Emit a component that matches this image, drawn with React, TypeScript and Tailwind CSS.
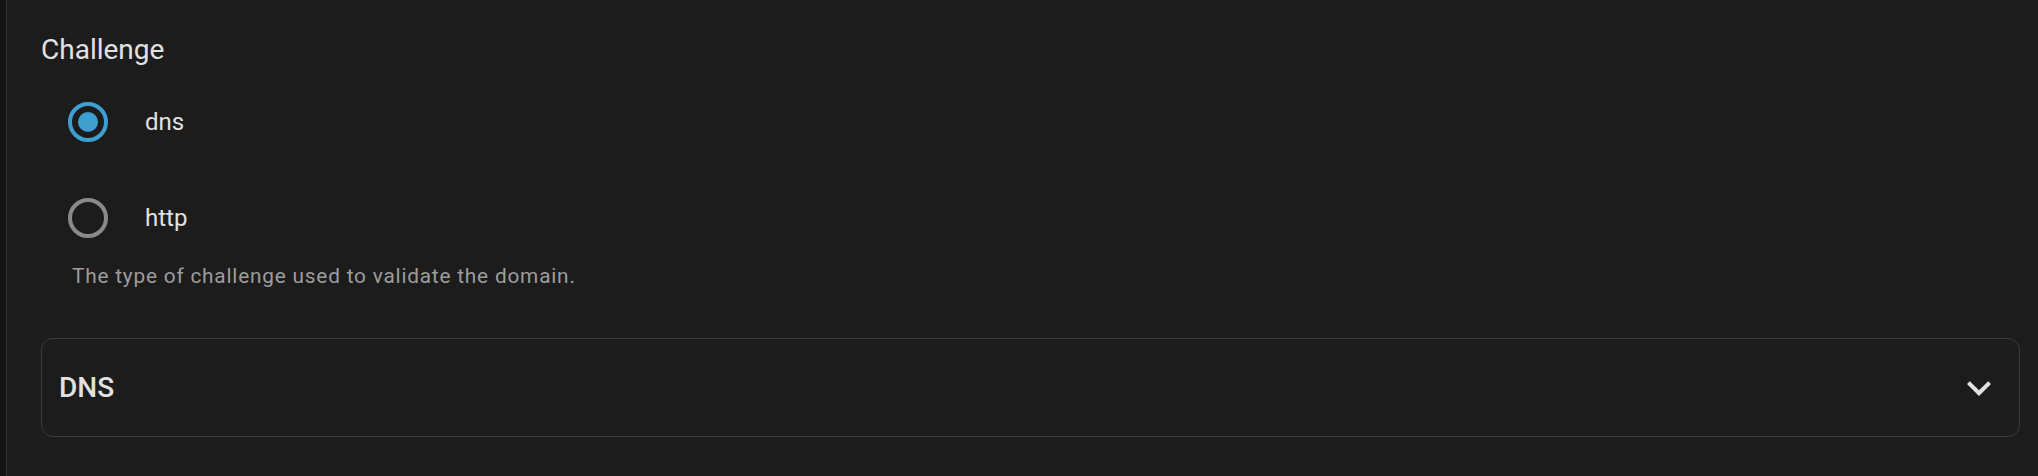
import { useState } from "react";

const options = ["dns", "http"];

function Radio({ checked }: { checked: boolean }) {
  return (
    <span
      className={
        "flex h-[40px] w-[40px] items-center justify-center rounded-full border-[4px] " +
        (checked ? "border-[#3f9fd0]" : "border-[#8a8a8a]")
      }
    >
      {checked && <span className="h-[20px] w-[20px] rounded-full bg-[#3f9fd0]" />}
    </span>
  );
}

export default function App() {
  const [challenge, setChallenge] = useState("dns");

  return (
    <div
      className="flex min-h-[476px] w-full bg-[#1c1c1c]"
      style={{ fontFamily: "Roboto, 'Noto Sans', sans-serif" }}
    >
      {/* Sidebar edge */}
      <div className="w-[7px] shrink-0 bg-[#141414] border-r border-[#343434]" />

      <div className="flex-1 pl-[34px] pr-[18px] pt-[32px]">
        {/* Challenge */}
        <div className="text-[28px] leading-[36px] text-[#e1e1e1]">Challenge</div>

        <div className="mt-[6px]">
          {options.map((opt) => (
            <label
              key={opt}
              onClick={() => setChallenge(opt)}
              className="flex h-[96px] cursor-pointer items-center pl-[27px]"
            >
              <Radio checked={challenge === opt} />
              <span className="ml-[37px] text-[24px] leading-[32px] text-[#e1e1e1]">{opt}</span>
            </label>
          ))}
        </div>

        <div className="pl-[31px] text-[20.8px] leading-[20px] tracking-[0.8px] text-[#9d9d9d]">
          The type of challenge used to validate the domain.
        </div>

        {/* DNS panel */}
        <div className="mt-[52px] flex h-[99px] items-center justify-between rounded-[12px] border border-[#3a3a3a] pl-[17px] pr-[16px]">
          <span className="text-[28px] font-medium text-[#e1e1e1]">DNS</span>
          <svg width="48" height="48" viewBox="0 0 24 24" fill="#e1e1e1">
            <path d="M7.41,8.58L12,13.17L16.59,8.58L18,10L12,16L6,10L7.41,8.58Z" />
          </svg>
        </div>
      </div>
    </div>
  );
}
